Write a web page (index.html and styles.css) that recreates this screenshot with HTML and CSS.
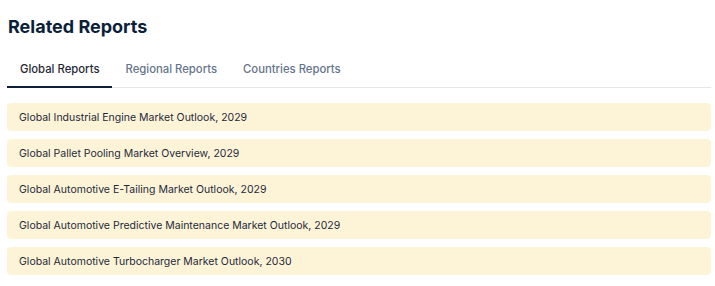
FILE: index.html
```html
<!DOCTYPE html>
<html>
<head>
<meta charset="utf-8">
<link rel="stylesheet" href="styles.css">
</head>
<body>
<section class="related">
  <h2 class="title">Related Reports</h2>
  <nav class="tabs">
    <span class="tab active">Global Reports</span>
    <span class="tab">Regional Reports</span>
    <span class="tab">Countries Reports</span>
  </nav>
  <ul class="list">
    <li class="item">Global Industrial Engine Market Outlook, 2029</li>
    <li class="item">Global Pallet Pooling Market Overview, 2029</li>
    <li class="item">Global Automotive E-Tailing Market Outlook, 2029</li>
    <li class="item">Global Automotive Predictive Maintenance Market Outlook, 2029</li>
    <li class="item">Global Automotive Turbocharger Market Outlook, 2030</li>
  </ul>
</section>
</body>
</html>
```
FILE: styles.css
```css
html, body {
  margin: 0;
  padding: 0;
  background: #ffffff;
}
body {
  font-family: Inter, "Noto Sans", sans-serif;
}
.related {
  padding: 14px 4px 0 7px;
}
.title {
  margin: 0 0 0 1px;
  font-size: 18px;
  line-height: 26px;
  font-weight: 700;
  color: #0b1f3b;
}
.tabs {
  display: flex;
  margin-top: 20px;
  border-bottom: 1px solid #e5e7eb;
}
.tab {
  padding: 0 13px 7px;
  font-size: 11.3px;
  line-height: 19px;
  font-weight: 500;
  color: #64748b;
  border-bottom: 2px solid transparent;
  margin-bottom: -1px;
}
.tab.active {
  color: #1f2937;
  border-bottom-color: #0b1f3b;
}
.list {
  list-style: none;
  margin: 15px 0 0;
  padding: 0;
  display: flex;
  flex-direction: column;
  gap: 8px;
}
.item {
  background: #fdf4d7;
  border-radius: 4px;
  height: 28px;
  display: flex;
  align-items: center;
  padding: 0 12px;
  font-size: 10.5px;
  color: #1e293b;
}
```
